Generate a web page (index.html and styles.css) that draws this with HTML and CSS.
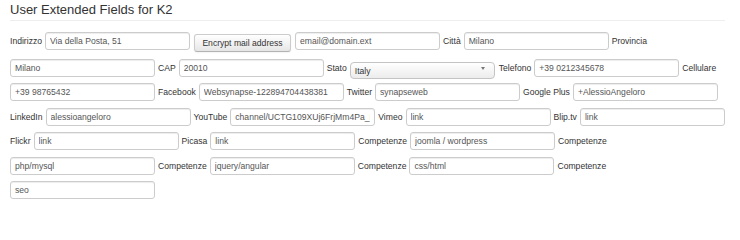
FILE: index.html
```html
<!DOCTYPE html>
<html lang="it">
<head>
<meta charset="utf-8">
<title>User Extended Fields for K2</title>
<link rel="stylesheet" href="styles.css">
</head>
<body>
<div class="panel">
  <h2 class="title">User Extended Fields for K2</h2>
  <div class="fields">
    <div class="row row-first">
      <label class="lbl">Indirizzo</label>
      <input class="fld" type="text" value="Via della Posta, 51">
      <button class="btn" type="button">Encrypt mail address</button>
      <input class="fld" type="text" value="email@domain.ext">
      <label class="lbl">Città</label>
      <input class="fld" type="text" value="Milano">
      <label class="lbl">Provincia</label>
    </div>
    <div class="row">
      <input class="fld" type="text" value="Milano">
      <label class="lbl">CAP</label>
      <input class="fld" type="text" value="20010">
      <label class="lbl">Stato</label>
      <span class="sel"><select class="sel-input"><option>Italy</option></select></span>
      <label class="lbl lbl-wide">Telefono</label>
      <input class="fld" type="text" value="+39 0212345678">
      <label class="lbl">Cellulare</label>
    </div>
    <div class="row">
      <input class="fld" type="text" value="+39 98765432">
      <label class="lbl">Facebook</label>
      <input class="fld" type="text" value="Websynapse-122894704438381">
      <label class="lbl">Twitter</label>
      <input class="fld" type="text" value="synapseweb">
      <label class="lbl">Google Plus</label>
      <input class="fld" type="text" value="+AlessioAngeloro">
    </div>
    <div class="row">
      <label class="lbl">LinkedIn</label>
      <input class="fld" type="text" value="alessioangeloro">
      <label class="lbl">YouTube</label>
      <input class="fld" type="text" value="channel/UCTG109XUj6FrjMm4Pa_Blk">
      <label class="lbl">Vimeo</label>
      <input class="fld" type="text" value="link">
      <label class="lbl">Blip.tv</label>
      <input class="fld" type="text" value="link">
    </div>
    <div class="row">
      <label class="lbl">Flickr</label>
      <input class="fld" type="text" value="link">
      <label class="lbl">Picasa</label>
      <input class="fld" type="text" value="link">
      <label class="lbl">Competenze</label>
      <input class="fld" type="text" value="joomla / wordpress">
      <label class="lbl">Competenze</label>
    </div>
    <div class="row">
      <input class="fld" type="text" value="php/mysql">
      <label class="lbl">Competenze</label>
      <input class="fld" type="text" value="jquery/angular">
      <label class="lbl">Competenze</label>
      <input class="fld" type="text" value="css/html">
      <label class="lbl">Competenze</label>
    </div>
    <div class="row">
      <input class="fld" type="text" value="seo">
    </div>
  </div>
</div>
</body>
</html>
```

FILE: styles.css
```css
html, body {
  margin: 0;
  padding: 0;
  background: #ffffff;
}

body {
  font-family: "Liberation Sans", Arial, Helvetica, sans-serif;
  color: #333333;
}

.panel {
  width: 715px;
  padding: 0 0 0 10px;
}

.title {
  margin: 0;
  padding: 2px 0 0 0;
  font-size: 13px;
  line-height: 16px;
  font-weight: normal;
  color: #333333;
  border-bottom: 1px solid #eeeeee;
  padding-bottom: 2px;
}

.fields {
  display: flex;
  flex-direction: column;
  gap: 6.5px;
  padding-top: 11px;
}

.row {
  display: flex;
  align-items: flex-start;
  gap: 3px;
  height: 18px;
}

.row-first {
  height: 20px;
}

.lbl {
  font-size: 8.6px;
  line-height: 18px;
  color: #333333;
  white-space: nowrap;
}

.lbl-wide {
  margin-left: 1px;
}

.fld {
  box-sizing: border-box;
  width: 145px;
  height: 18px;
  margin: 0;
  padding: 0 4px;
  border: 1px solid #cccccc;
  border-radius: 3px;
  box-shadow: inset 0 1px 1px rgba(0, 0, 0, 0.075);
  background: #ffffff;
  font-family: "Liberation Sans", Arial, Helvetica, sans-serif;
  font-size: 8.6px;
  color: #555555;
  outline: none;
}

.btn {
  box-sizing: border-box;
  width: 97px;
  height: 18px;
  margin: 2px 1px 0 1px;
  padding: 0;
  border: 1px solid #cccccc;
  border-bottom-color: #b3b3b3;
  border-radius: 3px;
  background: linear-gradient(#ffffff, #e6e6e6);
  box-shadow: inset 0 1px 0 rgba(255, 255, 255, 0.2), 0 1px 2px rgba(0, 0, 0, 0.05);
  font-family: "Liberation Sans", Arial, Helvetica, sans-serif;
  font-size: 8.6px;
  color: #333333;
}

.sel {
  position: relative;
  display: block;
  width: 145px;
  height: 17px;
  margin-top: 1px;
}

.sel::after {
  content: "";
  position: absolute;
  right: 10px;
  top: 7px;
  border-left: 2.5px solid transparent;
  border-right: 2.5px solid transparent;
  border-top: 3px solid #777777;
  pointer-events: none;
}

.sel-input {
  -webkit-appearance: none;
  appearance: none;
  box-sizing: border-box;
  width: 145px;
  height: 17px;
  margin: 0;
  padding: 0 4px;
  border: 1px solid #c4c4c4;
  border-radius: 4px;
  background: linear-gradient(#ffffff, #ececec);
  font-family: "Liberation Sans", Arial, Helvetica, sans-serif;
  font-size: 8.6px;
  color: #333333;
  outline: none;
}
```
